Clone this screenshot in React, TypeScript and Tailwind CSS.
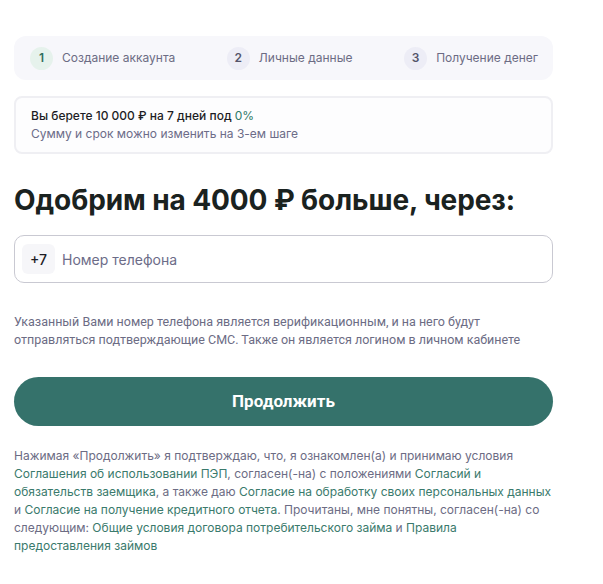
const steps = [
  { n: "1", label: "Создание аккаунта", active: true },
  { n: "2", label: "Личные данные", active: false },
  { n: "3", label: "Получение денег", active: false },
];

export default function App() {
  return (
    <div className="min-h-screen bg-white font-['Inter',sans-serif]">
      <div className="ml-[14px] w-[539px] pt-[36px] pb-8">
        <div className="flex h-[44px] items-center justify-between rounded-xl bg-[#f7f7fb] pl-[16px] pr-[15px]">
          {steps.map((s) => (
            <div key={s.n} className="flex items-center gap-[9px]">
              <span
                className={
                  s.active
                    ? "flex h-[23px] w-[23px] items-center justify-center rounded-full bg-[#e6f2ec] text-[12px] font-semibold text-[#2f6f5f]"
                    : "flex h-[23px] w-[23px] items-center justify-center rounded-full bg-[#ededf6] text-[12px] font-semibold text-[#54546a]"
                }
              >
                {s.n}
              </span>
              <span className="text-[12px] text-[#6c6c84]">{s.label}</span>
            </div>
          ))}
        </div>

        <div className="mt-[16px] rounded-lg border-2 border-[#efeff3] bg-[#fdfdfe] px-[15px] py-[9px]">
          <p className="text-[12px] leading-[18px] font-medium text-[#1d1d25]">
            Вы берете 10 000 ₽ на 7 дней под <span className="font-normal text-[#2f7a68]">0%</span>
          </p>
          <p className="text-[12px] leading-[18px] text-[#6c6c88]">Сумму и срок можно изменить на 3-ем шаге</p>
        </div>

        <h1 className="mt-[29px] text-[28px] leading-[34px] font-bold tracking-[-0.1px] text-[#1a2220]">
          Одобрим на 4000 ₽ больше, через:
        </h1>

        <div className="mt-[18px] flex h-[48px] items-center rounded-[10px] border border-[#c9c9d2] pl-[7px]">
          <span className="flex h-[30px] w-[33px] items-center justify-center rounded-md bg-[#f6f6f9] text-[14px] font-medium text-[#1d1d25]">
            +7
          </span>
          <input
            className="ml-[7px] flex-1 bg-transparent text-[14px] text-[#1d1d25] placeholder-[#6c6c88] outline-none"
            placeholder="Номер телефона"
          />
        </div>

        <p className="mt-[30px] font-['Roboto',sans-serif] text-[12.5px] leading-[18px] text-[#6c6c84]">
          Указанный Вами номер телефона является верификационным, и на него будут отправляться подтверждающие СМС. Также он является логином в личном кабинете
        </p>

        <button className="mt-[28px] flex h-[49px] w-full items-center justify-center rounded-full bg-[#35726b] font-['Roboto',sans-serif] text-[17px] font-bold text-white">
          Продолжить
        </button>

        <p className="mt-[21px] text-[12px] leading-[18px] text-[#6c6c84]">
          Нажимая «Продолжить» я подтверждаю, что, я ознакомлен(а) и принимаю условия{" "}
          <a className="text-[#3a7a6c]">Соглашения об использовании ПЭП</a>, согласен(-на) с положениями{" "}
          <a className="text-[#3a7a6c]">Согласий и обязательств заемщика</a>, а также даю{" "}
          <a className="text-[#3a7a6c]">Согласие на обработку своих персональных данных</a> и{" "}
          <a className="text-[#3a7a6c]">Согласие на получение кредитного отчета</a>. Прочитаны, мне понятны, согласен(-на) со следующим:{" "}
          <a className="text-[#3a7a6c]">Общие условия договора потребительского займа</a> и{" "}
          <a className="text-[#3a7a6c]">Правила предоставления займов</a>
        </p>
      </div>
    </div>
  );
}
